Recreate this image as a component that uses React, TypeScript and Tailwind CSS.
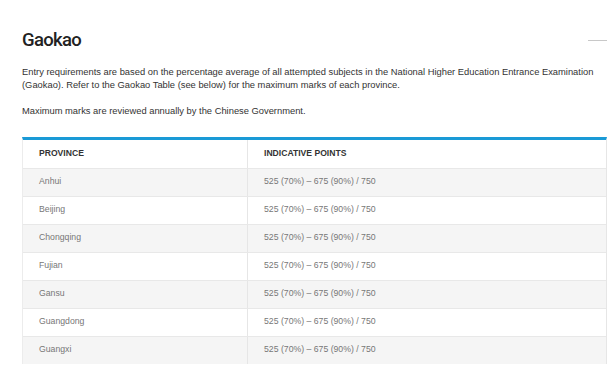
import React from "react";

const rows = ["Anhui", "Beijing", "Chongqing", "Fujian", "Gansu", "Guangdong", "Guangxi"];

export default function App() {
  return (
    <div className="w-[610px] h-[376px] overflow-hidden bg-white" style={{ fontFamily: '"Liberation Sans", Arial, sans-serif' }}>
      <div className="pl-[22px] pr-[3px] pt-[29px]">
        <div className="flex items-center justify-between">
          <h1 className="text-[18.5px] leading-[22px] text-[#222] font-[Roboto,sans-serif] font-medium tracking-[-0.7px]">Gaokao</h1>
          <div className="w-[19px] h-px bg-[#c8c8c8] mt-[1px]" />
        </div>
        <p className="mt-[15px] text-[9.35px] leading-[12.5px] text-[#333]">
          Entry requirements are based on the percentage average of all attempted subjects in the National Higher Education Entrance Examination (Gaokao). Refer to the Gaokao Table (see below) for the maximum marks of each province.
        </p>
        <p className="mt-[14px] text-[9.35px] leading-[12.5px] text-[#333]">
          Maximum marks are reviewed annually by the Chinese Government.
        </p>
        <div className="mt-[19px] border-t-[3px] border-[#1a9ad6] border-r border-r-[#e6e6e6] border-l border-l-[#ececec]">
          <div className="flex h-[28px] bg-white text-[8.6px] font-bold text-[#333] items-center">
            <div className="w-[225px] pl-[16px] h-full flex items-center border-r border-[#e6e6e6]">PROVINCE</div>
            <div className="pl-[16px]">INDICATIVE POINTS</div>
          </div>
          {rows.map((r, i) => (
            <div key={r} className={`flex h-[28px] border-t border-[#e8e8e8] text-[8.7px] text-[#777] items-center ${i % 2 === 0 ? "bg-[#f5f5f5]" : "bg-white"}`}>
              <div className="w-[225px] pl-[16px] h-full flex items-center border-r border-[#e6e6e6]">{r}</div>
              <div className="pl-[16px]">525 (70%) – 675 (90%) / 750</div>
            </div>
          ))}
        </div>
      </div>
    </div>
  );
}
